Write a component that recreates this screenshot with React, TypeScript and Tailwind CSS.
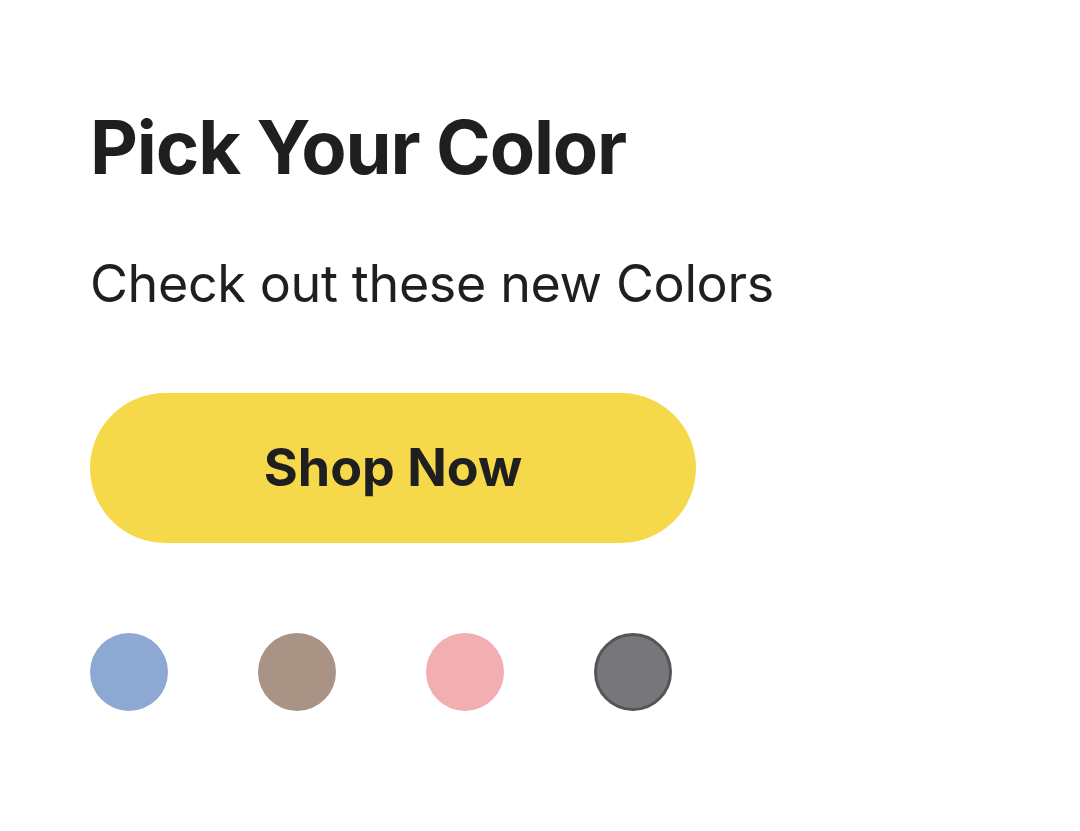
export default function App() {
  return (
    <div className="min-h-[831px] w-[1080px] bg-white" style={{ fontFamily: "Inter, sans-serif" }}>
      <div className="flex flex-col items-start pl-[90px] pt-[110px]">
        <h1 className="text-[74px] font-bold leading-none tracking-[-0.015em] text-[#1f1f1f]">Pick Your Color</h1>
        <p className="mt-[74px] text-[52px] leading-none tracking-[-0.007em] text-[#1f1f1f]">Check out these new Colors</p>
        <button className="mt-[83px] flex h-[150px] w-[606px] items-center justify-center rounded-full bg-[#f6d94b] text-[52px] font-bold text-[#1f1f1f]">
          Shop Now
        </button>
        <div className="mt-[90px] flex gap-[90px]">
          <div className="h-[78px] w-[78px] rounded-full bg-[#8ea8d4]" />
          <div className="h-[78px] w-[78px] rounded-full bg-[#a89384]" />
          <div className="h-[78px] w-[78px] rounded-full bg-[#f2aeb3]" />
          <div className="h-[78px] w-[78px] rounded-full border-[3px] border-[#555457] bg-[#77767b]" />
        </div>
      </div>
    </div>
  );
}
